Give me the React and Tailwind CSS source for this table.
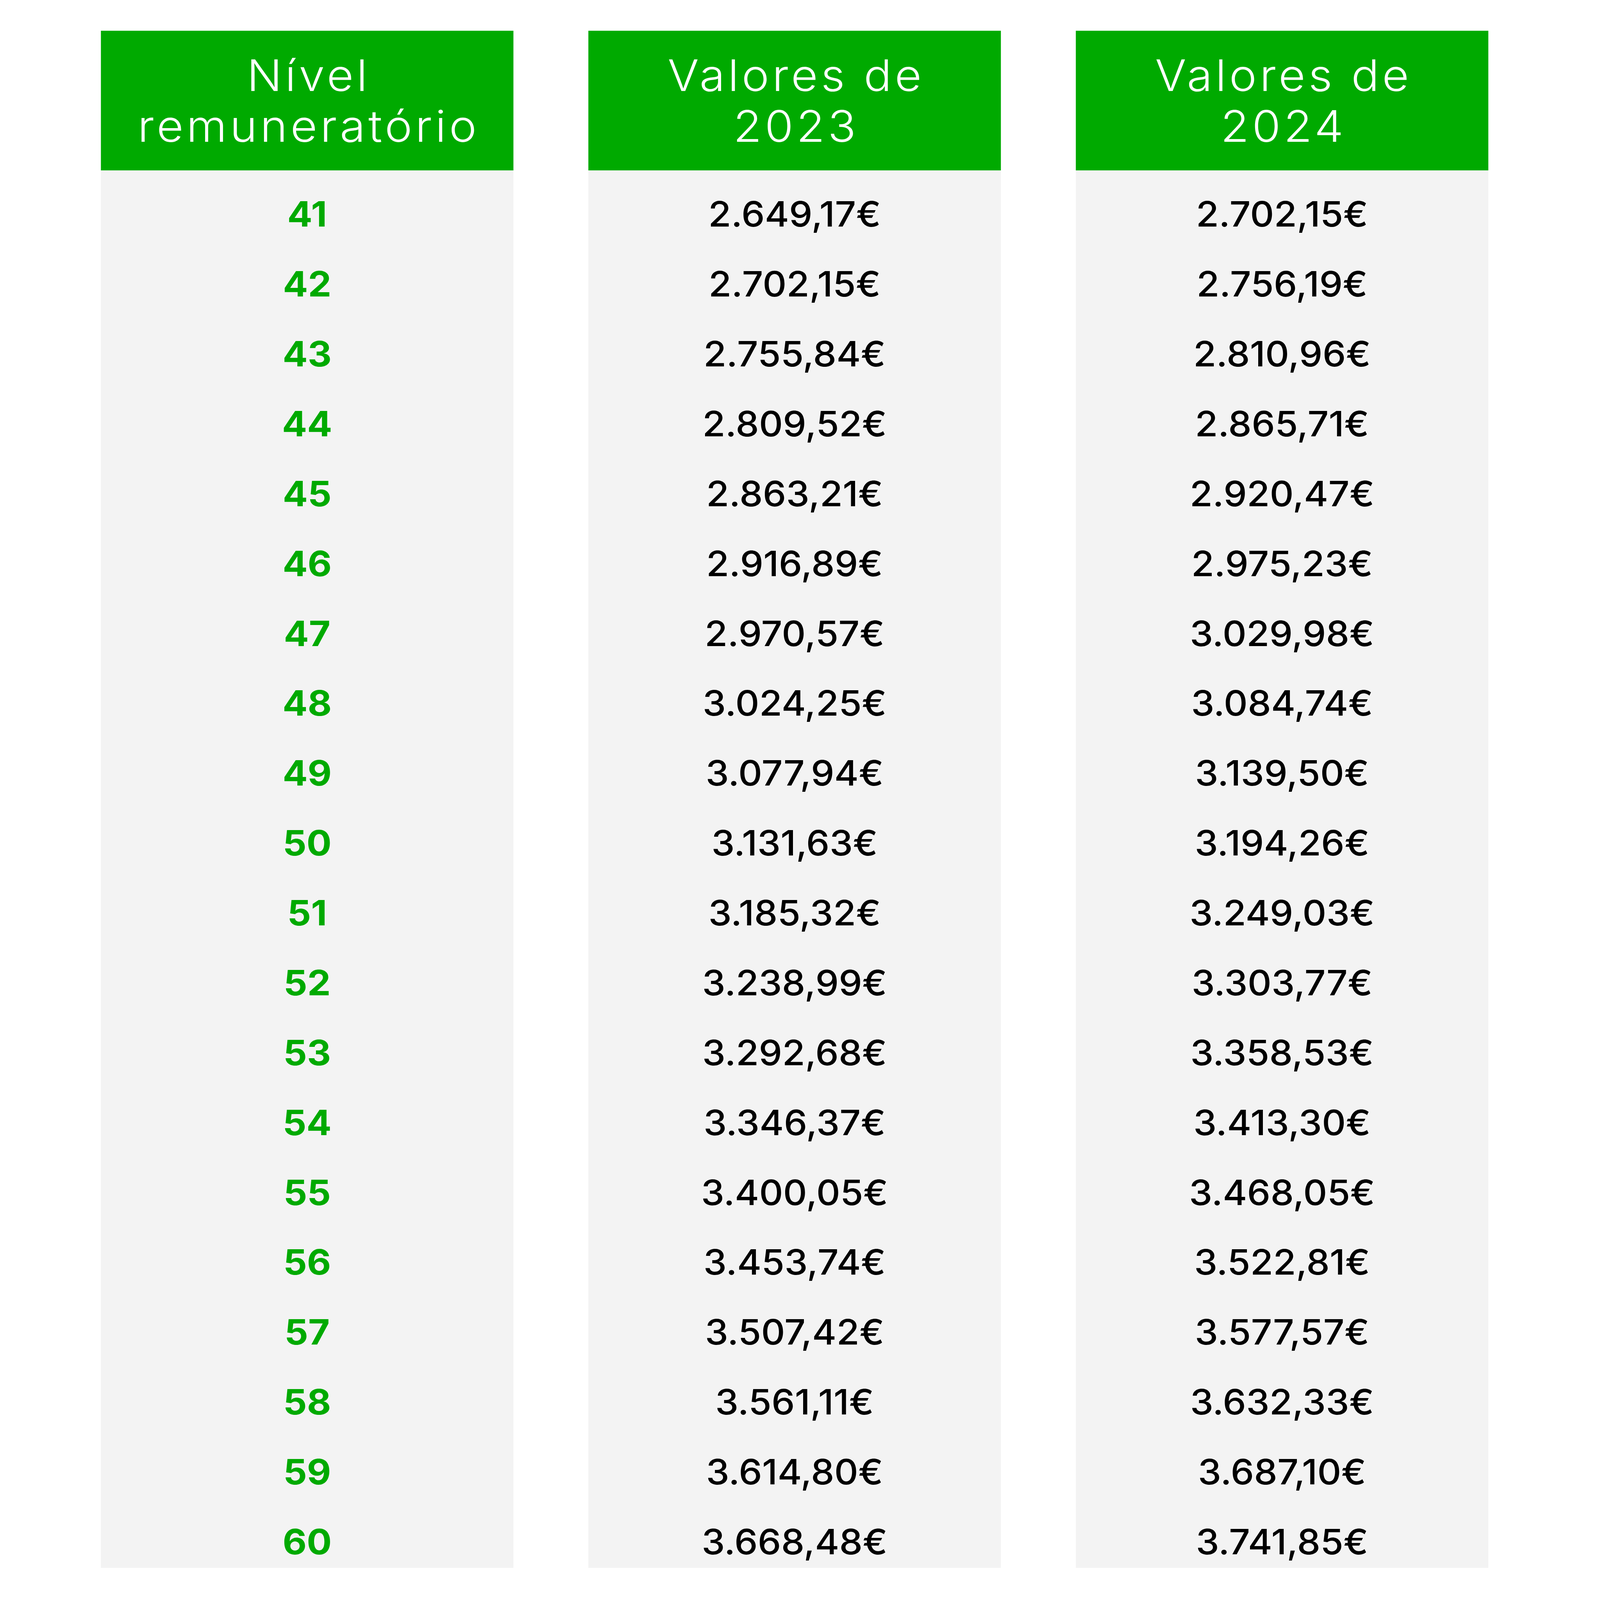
import React, { useEffect, useState } from "react";

const rows = [
  ["41", "2.649,17€", "2.702,15€"],
  ["42", "2.702,15€", "2.756,19€"],
  ["43", "2.755,84€", "2.810,96€"],
  ["44", "2.809,52€", "2.865,71€"],
  ["45", "2.863,21€", "2.920,47€"],
  ["46", "2.916,89€", "2.975,23€"],
  ["47", "2.970,57€", "3.029,98€"],
  ["48", "3.024,25€", "3.084,74€"],
  ["49", "3.077,94€", "3.139,50€"],
  ["50", "3.131,63€", "3.194,26€"],
  ["51", "3.185,32€", "3.249,03€"],
  ["52", "3.238,99€", "3.303,77€"],
  ["53", "3.292,68€", "3.358,53€"],
  ["54", "3.346,37€", "3.413,30€"],
  ["55", "3.400,05€", "3.468,05€"],
  ["56", "3.453,74€", "3.522,81€"],
  ["57", "3.507,42€", "3.577,57€"],
  ["58", "3.561,11€", "3.632,33€"],
  ["59", "3.614,80€", "3.687,10€"],
  ["60", "3.668,48€", "3.741,85€"],
];

// design size of the table graphic
const W = 4313;
const H = 4580;

function Column({ title, values, level }) {
  return (
    <div className="w-[1112px] shrink-0 flex flex-col">
      <div className="h-[400px] bg-[#00AA00] flex items-center justify-center text-center">
        <h2 className="text-white font-light text-[125px] leading-[146px] tracking-[8px] pl-[8px]">
          {title[0]}
          <br />
          {title[1]}
        </h2>
      </div>
      <div className="bg-[#F3F3F3]">
        {values.map((v) => (
          <div key={v + title[1]} className="h-[200px] pt-[50px] flex items-center justify-center">
            <span
              className={
                level
                  ? "text-[100px] leading-none font-bold text-[#00AA00]"
                  : "text-[100px] leading-none font-medium text-black"
              }
            >
              {v}
            </span>
          </div>
        ))}
      </div>
    </div>
  );
}

function useViewport() {
  const [size, setSize] = useState(() => ({ w: window.innerWidth, h: window.innerHeight }));
  useEffect(() => {
    const onResize = () => setSize({ w: window.innerWidth, h: window.innerHeight });
    window.addEventListener("resize", onResize);
    return () => window.removeEventListener("resize", onResize);
  }, []);
  return size;
}

export default function App() {
  const { w, h } = useViewport();
  // fit the graphic to the window it is shown in
  const sx = w / W;
  const sy = h / H;

  return (
    <div className="w-screen h-screen overflow-hidden bg-white">
      <div
        className="w-[4313px] h-[4580px] bg-white flex gap-[202px] pl-[272px] pt-[88px] origin-top-left"
        style={{
          fontFamily: "Inter, 'Noto Sans', sans-serif",
          transform: `scale(${sx}, ${sy})`,
        }}
      >
        <Column title={["Nível", "remuneratório"]} values={rows.map((r) => r[0])} level />
        <Column title={["Valores de", "2023"]} values={rows.map((r) => r[1])} />
        <Column title={["Valores de", "2024"]} values={rows.map((r) => r[2])} />
      </div>
    </div>
  );
}
